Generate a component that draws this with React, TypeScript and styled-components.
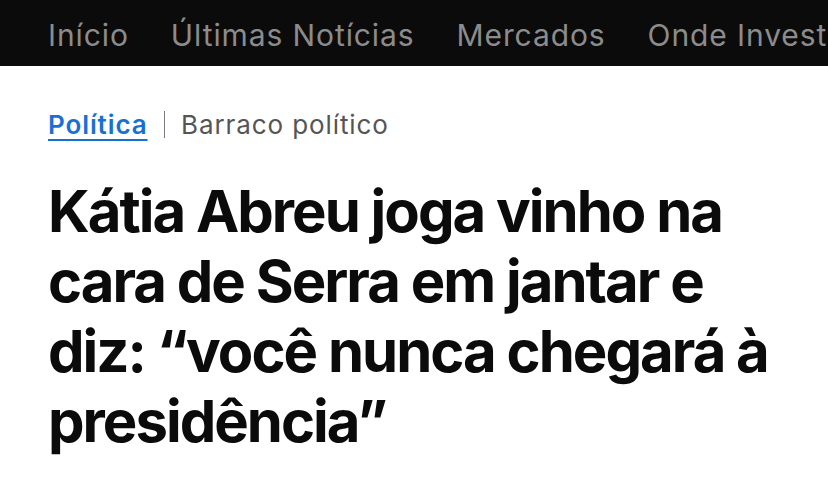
import React, { FC } from 'react';
import styled, { createGlobalStyle } from 'styled-components';

const GlobalStyle = createGlobalStyle`
	html, body {
		margin: 0;
		padding: 0;
		background: #ffffff;
	}
	body {
		font-family: Inter, 'Noto Sans', sans-serif;
		-webkit-font-smoothing: antialiased;
	}
`;

const NAV_ITEMS = ['Início', 'Últimas Notícias', 'Mercados', 'Onde Investir'];

const App: FC = () => (
	<>
		<GlobalStyle />
		<Page>
			<NavBar>
				{NAV_ITEMS.map((item) => (
					<NavItem key={item} href="#">
						{item}
					</NavItem>
				))}
			</NavBar>
			<Article>
				<Breadcrumb>
					<SectionLink href="#">Política</SectionLink>
					<Divider />
					<Tag>Barraco político</Tag>
				</Breadcrumb>
				<Headline>
					Kátia Abreu joga vinho na cara de Serra em jantar e diz: “você nunca chegará à
					presidência”
				</Headline>
			</Article>
		</Page>
	</>
);

const Page = styled.div`
	width: 828px;
	height: 490px;
	overflow: hidden;
	background: #ffffff;
`;

const NavBar = styled.nav`
	display: flex;
	align-items: center;
	gap: 42px;
	height: 66px;
	padding: 3px 48px 0;
	box-sizing: border-box;
	background: #0b0b0b;
	white-space: nowrap;
	overflow: hidden;
`;

const NavItem = styled.a`
	font-size: 30px;
	color: #8c8c8c;
	text-decoration: none;
	letter-spacing: 0.9px;
`;

const Article = styled.main`
	padding: 39px 24px 0 48px;
`;

const Breadcrumb = styled.div`
	display: flex;
	align-items: center;
	gap: 16px;
	height: 38px;
`;

const SectionLink = styled.a`
	font-size: 26px;
	font-weight: 600;
	letter-spacing: 0.9px;
	color: #1870d5;
	text-decoration: underline;
	text-decoration-thickness: 2px;
	text-underline-offset: 5px;
`;

const Divider = styled.span`
	width: 1.5px;
	height: 27px;
	background: #7a7a7a;
`;

const Tag = styled.span`
	font-size: 26px;
	letter-spacing: 0.9px;
	color: #555555;
`;

const Headline = styled.h1`
	margin: 33px 0 0;
	font-size: 58px;
	line-height: 70px;
	font-weight: 700;
	letter-spacing: -0.034em;
	color: #0b0b0b;
`;

export default App;
